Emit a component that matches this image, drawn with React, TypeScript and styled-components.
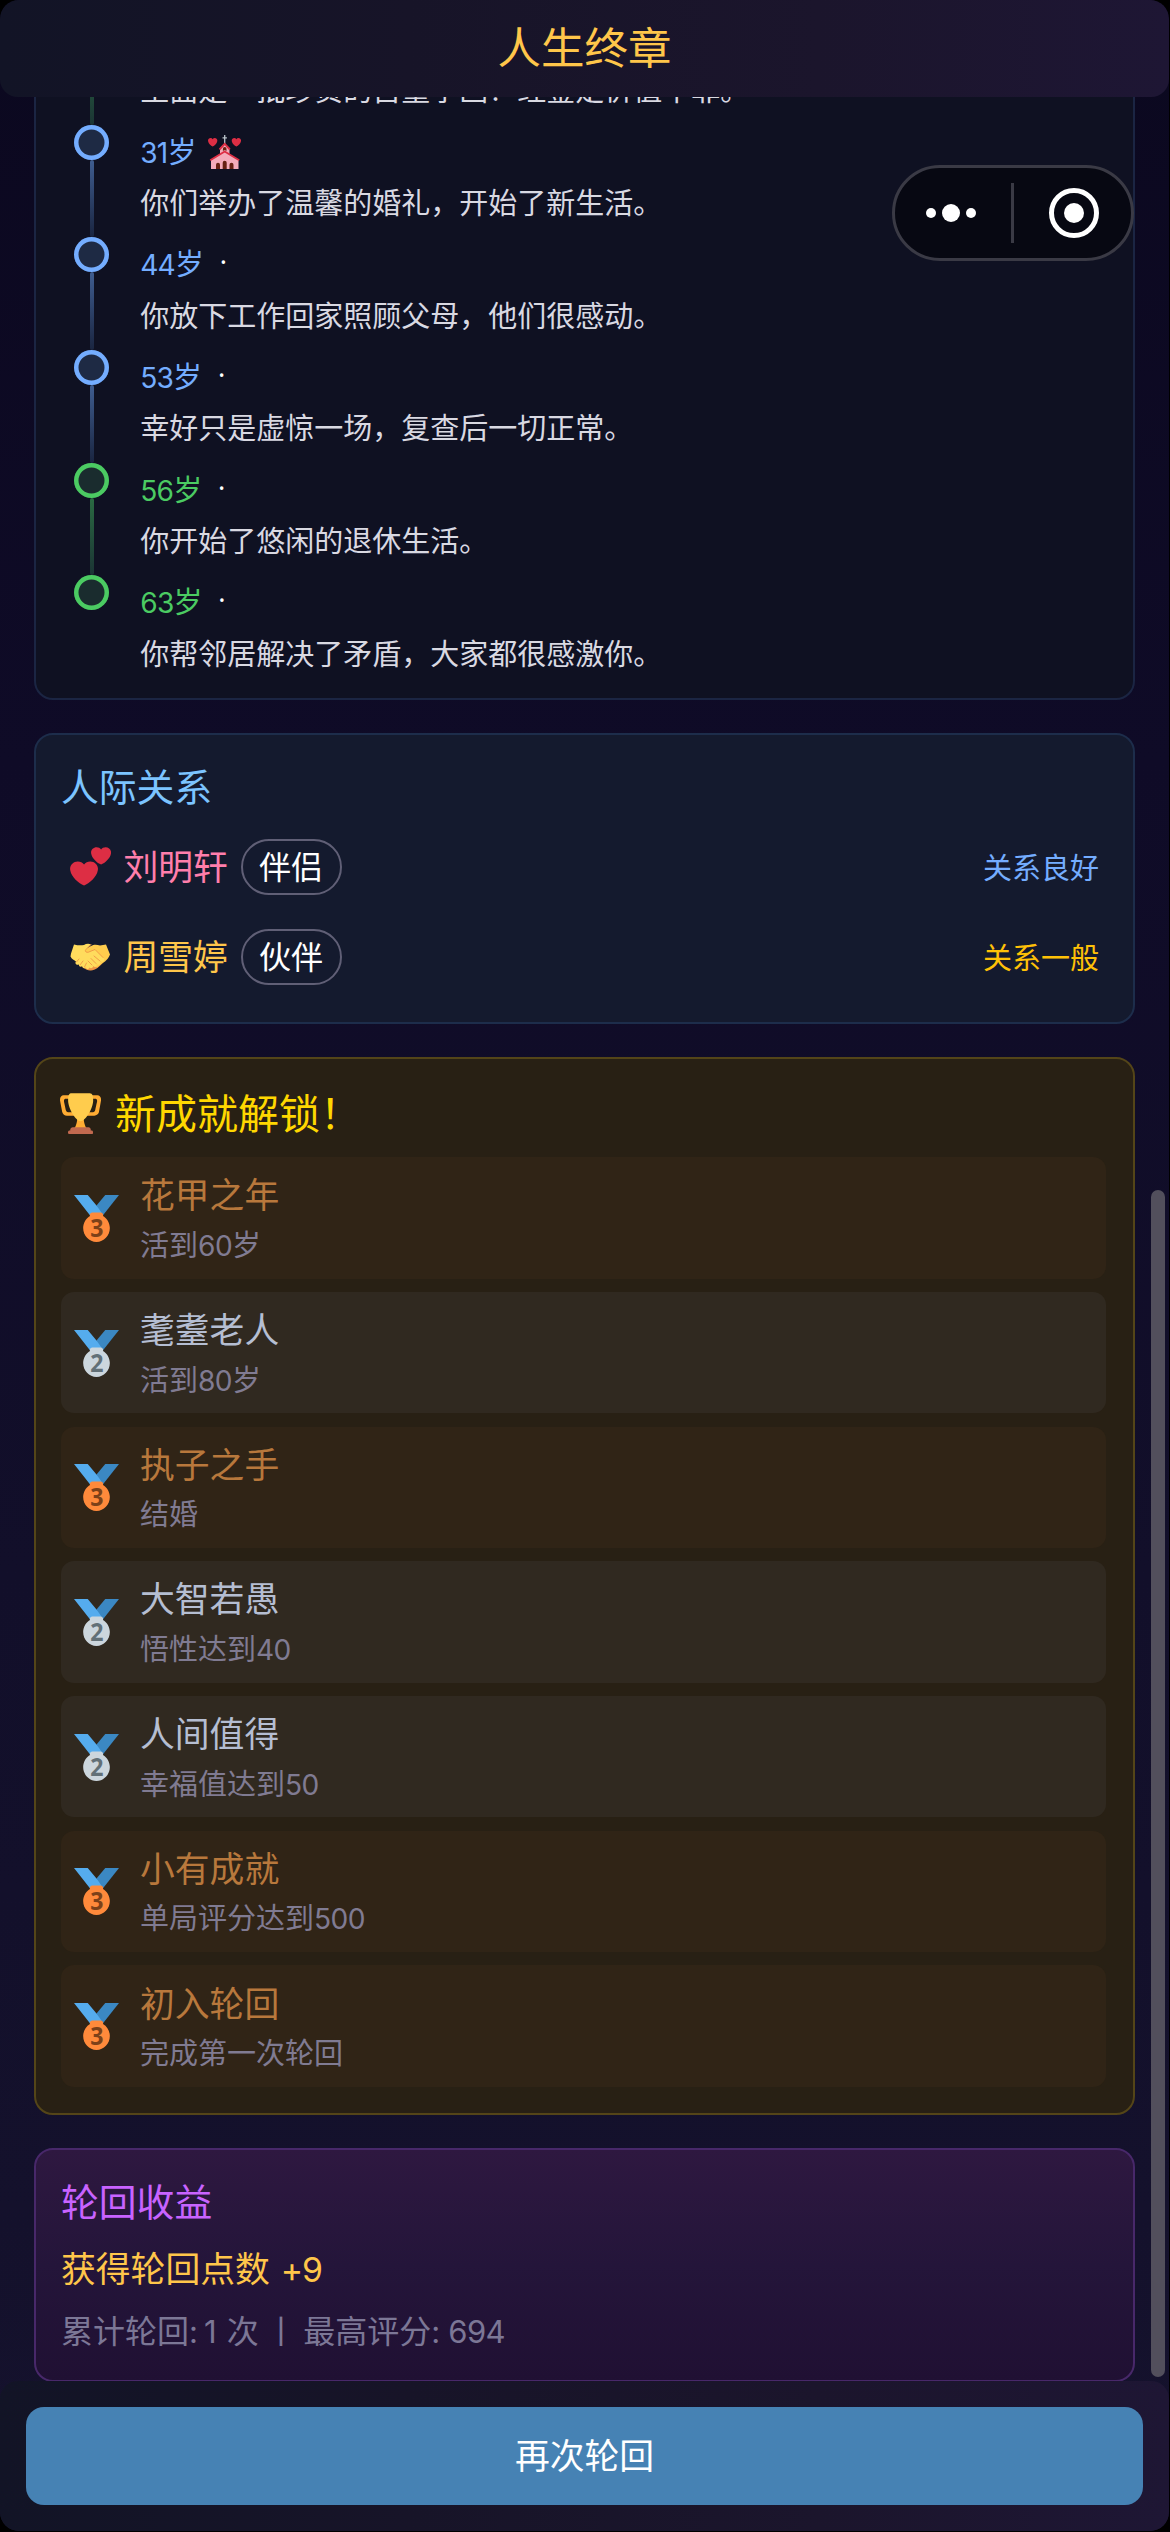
import React from "react";
import styled, { createGlobalStyle } from "styled-components";

const cjk = `"Noto Sans CJK SC", "Noto Sans", sans-serif`;

const GlobalStyle = createGlobalStyle`
  * { box-sizing: border-box; }
  html, body { margin: 0; background: #000; }
  body { font-family: ${cjk}; color: #fff; overflow: hidden; }
`;

const Page = styled.main`
  position: relative;
  display: flex;
  flex-direction: column;
  width: 1169px;
  height: 2531px;
  margin-bottom: 1px;
  overflow: hidden;
  border-radius: 19px;
  background: linear-gradient(180deg, #0b081f 0%, #0f0b27 30%, #120f2a 62%, #15122d 100%);
`;

const barFill = `linear-gradient(90deg, #121426 0%, #171428 35%, #1b152c 70%, #1e1634 100%)`;

const Header = styled.header`
  flex: none;
  display: flex;
  align-items: center;
  justify-content: center;
  height: 97px;
  padding-bottom: 5px;
  border-radius: 18px;
  background: ${barFill};
  z-index: 1;
`;

const HeaderTitle = styled.h1`
  margin: 0;
  font-size: 43.5px;
  line-height: 56px;
  font-weight: 400;
  color: #ffc64a;
`;

const Content = styled.div`
  flex: 1;
  min-height: 0;
  display: flex;
  flex-direction: column;
  gap: 33px;
  padding: 0 34px;
  overflow: hidden;
`;

const Card = styled.section<{ $bg: string; $line: string }>`
  flex: none;
  width: 1101px;
  border: 2px solid ${(p) => p.$line};
  border-radius: 19px;
  background: ${(p) => p.$bg};
`;

const TimelineCard = styled(Card)`
  margin-top: -130px;
  padding: 43px 25px 9.8px 38px;
`;

const Event = styled.article`
  display: flex;
  gap: 31.3px;
  height: 112.7px;
`;

const Rail = styled.div`
  flex: none;
  display: flex;
  flex-direction: column;
  align-items: center;
  width: 35px;
`;

const Node = styled.i<{ $color: string; $fill: string }>`
  flex: none;
  width: 35px;
  height: 35px;
  border-radius: 50%;
  box-shadow: inset 0 0 0 4.5px ${(p) => p.$color};
  background: ${(p) => p.$fill};
`;

const Link = styled.i<{ $from: string; $to: string }>`
  flex: 1;
  width: 4px;
  border-radius: 2px;
  background: linear-gradient(180deg, ${(p) => p.$from}, ${(p) => p.$to});
`;

const EventBody = styled.div`
  display: flex;
  flex-direction: column;
  gap: 11.4px;
  padding-top: 5px;
`;

const EventHead = styled.div<{ $color: string }>`
  display: flex;
  align-items: center;
  height: 40px;
  font-size: 29px;
  line-height: 40px;
  color: ${(p) => p.$color};
`;

const EventText = styled.p`
  margin: 0;
  font-size: 29px;
  line-height: 40px;
  color: #d9d9e2;
  white-space: nowrap;
`;

const Num = styled.span<{ $track?: number; $left?: number; $right?: number }>`
  font-family: Inter, "Noto Sans", sans-serif;
  font-size: 0.97em;
  line-height: 0;
  letter-spacing: ${(p) => p.$track ?? -0.03}em;
  margin-left: ${(p) => p.$left ?? 0}px;
  margin-right: ${(p) => p.$right ?? 0}px;
`;

const Dot = styled.span`
  width: 29px;
  margin-left: 5px;
  color: #fff;
  font-family: "Noto Sans", sans-serif;
  font-size: 27px;
  text-align: center;
`;

const HeadIcon = styled.span`
  display: flex;
  margin: 4px 0 0 12px;
`;

const CardTitle = styled.h2<{ $color: string }>`
  margin: 0;
  font-size: 37.8px;
  line-height: 50px;
  font-weight: 400;
  color: ${(p) => p.$color};
`;

const RelationCard = styled(Card)`
  height: 291px;
  padding: 25px;
`;

const RelationList = styled.div`
  display: flex;
  flex-direction: column;
  margin-top: 12px;
`;

const Relation = styled.div`
  display: flex;
  align-items: center;
  height: 90px;
  padding: 0 9px;
`;

const RelationName = styled.span<{ $color: string }>`
  width: 105px;
  margin: 0 12px 4px 12.5px;
  font-size: 34.8px;
  line-height: 46px;
  white-space: nowrap;
  color: ${(p) => p.$color};
`;

const Tag = styled.span`
  display: flex;
  align-items: center;
  justify-content: center;
  width: 101px;
  height: 56px;
  padding-bottom: 3px;
  border: 2px solid #605f76;
  border-radius: 28px;
  font-size: 32px;
  line-height: 42px;
`;

const Status = styled.span<{ $color: string }>`
  margin: 0 0 2px auto;
  font-size: 29px;
  line-height: 40px;
  color: ${(p) => p.$color};
`;

const AwardCard = styled(Card)`
  padding: 25px 27px 26px 25px;
`;

const AwardTitle = styled.h2`
  display: flex;
  align-items: center;
  gap: 14px;
  height: 54px;
  margin: 0 0 19.3px -1px;
  font-size: 41px;
  line-height: 54px;
  font-weight: 400;
  color: #ffd700;

  svg { margin-top: 6px; }
`;

const AwardList = styled.div`
  display: flex;
  flex-direction: column;
  gap: 13.3px;
`;

const tiers = {
  bronze: { bg: "#302416", text: "#b8783c", disc: "#ff8a3b", ink: "#7c4119", place: "3" },
  silver: { bg: "#302920", text: "#b5bed2", disc: "#ccd6dd", ink: "#627077", place: "2" },
};
type Tier = keyof typeof tiers;

const Award = styled.div<{ $tier: Tier }>`
  display: flex;
  align-items: center;
  gap: 21px;
  height: 121.4px;
  padding-left: 13px;
  border-radius: 13px;
  background: ${(p) => tiers[p.$tier].bg};

  svg { margin-top: 1px; }
`;

const AwardBody = styled.div`
  display: flex;
  flex-direction: column;
  gap: 6.5px;
  margin-bottom: 2.5px;
`;

const AwardName = styled.span<{ $tier: Tier }>`
  font-size: 34.8px;
  line-height: 46px;
  color: ${(p) => tiers[p.$tier].text};
`;

const AwardRule = styled.span`
  font-size: 29px;
  line-height: 40px;
  color: #807b92;
`;

const RewardCard = styled(Card)`
  height: 234px;
  padding: 25px;
`;

const Points = styled.p`
  margin: 18.8px 0 0;
  font-size: 34.8px;
  line-height: 46px;
  color: #ffc64a;
`;

const Totals = styled.p`
  margin: 18.5px 0 0;
  font-size: 32px;
  line-height: 42px;
  color: #7c7796;
  white-space: nowrap;
`;

const Divider = styled.span`
  display: inline-block;
  width: 44.5px;
  text-align: center;
`;

const Footer = styled.footer`
  flex: none;
  height: 150px;
  padding: 26px;
  border-radius: 18px;
  background: ${barFill};
`;

const Again = styled.button`
  width: 100%;
  height: 98px;
  padding: 0 0 5px;
  border: 0;
  border-radius: 18px;
  background: #4682b4;
  color: #fff;
  font: 400 34.8px/46px ${cjk};
`;

/* Floating mini-program capsule, above the scrolled content */
const Capsule = styled.div`
  position: absolute;
  top: 165px;
  left: 891.5px;
  z-index: 2;
  display: flex;
  align-items: center;
  width: 242px;
  height: 96px;
  border: 3px solid #3a3a45;
  border-radius: 48px;
  background: #070812;
`;

const More = styled.div`
  flex: 1;
  display: flex;
  align-items: center;
  justify-content: center;
  gap: 6px;
  padding-right: 4px;
`;

const MoreDot = styled.i<{ $size: number }>`
  width: ${(p) => p.$size}px;
  height: ${(p) => p.$size}px;
  border-radius: 50%;
  background: #fff;
`;

const CapsuleRule = styled.i`
  width: 3px;
  height: 60px;
  background: #3a3a45;
`;

const CloseHalf = styled(More)`
  padding: 0 0 0 4px;
`;

const Target = styled.i`
  display: flex;
  align-items: center;
  justify-content: center;
  width: 50px;
  height: 50px;
  border: 5px solid #fff;
  border-radius: 50%;
`;

const ScrollThumb = styled.i`
  position: absolute;
  top: 1190px;
  left: 1151px;
  width: 14px;
  height: 1187px;
  border-radius: 7px;
  background: #524f5c;
`;

const heart =
  "M35.885 11.833c0-5.45-4.418-9.868-9.867-9.868-3.308 0-6.227 1.633-8.018 4.129-1.791-2.496-4.71-4.129-8.017-4.129-5.45 0-9.868 4.417-9.868 9.868 0 .772.098 1.52.266 2.241C1.751 22.587 11.216 31.568 18 34.034c6.783-2.466 16.249-11.447 17.617-19.959.17-.721.268-1.469.268-2.242z";

const HeartsIcon = () => (
  <svg width="41" height="41" viewBox="0 0 41 41">
    <g fill="#dd2e44">
      <path transform="translate(0 14) scale(.78 .75)" d={heart} />
      <path transform="translate(21 .2) scale(.56 .54)" d={heart} />
    </g>
  </svg>
);

const HandshakeIcon = () => (
  <svg width="41" height="41" viewBox="0 0 41 41">
    <path fill="#ef9645" d="M8 26c4 5 8 9 13 8.500 4 0 9-4 13-9l-3-8H13z" />
    <path fill="#ffcc4d" d="M21 10c3-2 6-1.500 9-.500l6-1 4 10c-1 3-3 5-5 7l-3 2-5 4-13-10-5-5z" />
    <path
      fill="#ffdc5d"
      d="M1 17.500 4 8.500c4 1 7 1 10 .500 2-1.300 5-1.500 7-.500l-5 5c-2 2 1 4 4 2l5-2 8 8c3 3 0 5.500-3 3.500 2 3-1 5-3.500 3 1 3-1.500 4-3.500 2 .5 2-2.500 3-3.500 1.500-1 2.500-3.500 2-3.500 0-2 1.500-4 .500-3.500-1.500-2 1.500-4 .500-3.500-1.500-2.500 1-4.500-1-3-3-1.500-1.500-4.500-2.500-5.500-5z"
    />
    <path
      fill="none"
      stroke="#ef9645"
      strokeWidth="0.900"
      strokeLinecap="round"
      d="M21 8.500l-5 5c-2 2 1 4 4 2l5-2 8 8M24 20l6 5M21 22.500l5 5M18 25l4 4M9 23l-2.500 3M13 25l-3 4M16.500 27l-2 4"
    />
  </svg>
);

const ChapelIcon = () => (
  <svg width="34" height="34" viewBox="0 0 34 34">
    <g fill="#dd2e44">
      <path transform="translate(0 2.600) scale(.26)" d={heart} />
      <path transform="translate(23.700 2.600) scale(.26)" d={heart} />
    </g>
    <path fill="none" stroke="#b9c2c9" strokeWidth="1.300" d="M16.700 0v9M14.500 2.800h4.400" />
    <path fill="#f4abba" d="M12 13l4.700-4.500L21.500 13v6l9 6v9H3v-9l9-6z" />
    <path
      fill="none"
      stroke="#dd2e44"
      strokeWidth="1.900"
      d="M11.500 14.500l5.200-5.600 5.200 5.600M2.200 25.200l14.500-8.700 14.500 8.700"
    />
    <path
      fill="#662113"
      d="M14.900 16v-2.200a1.800 1.800 0 0 1 3.600 0V16l-1.800-1zM14.700 34v-6.300a2 2 0 0 1 4 0V34zM8 34v-4.300a2 2 0 0 1 4 0V34zM21.500 34v-4.300a2 2 0 0 1 4 0V34z"
    />
  </svg>
);

const TrophyIcon = () => (
  <svg width="41" height="41" viewBox="0 0 36 36">
    <path
      fill="#ffac33"
      d="M5.123 5h6C12.227 5 13 4.896 13 6V4c0-1.104-.773-2-1.877-2h-8c-2 0-3.583 2.125-3 5 0 0 1.791 9.375 1.917 9.958C2.373 18.500 4.164 20 6.081 20h6.958c1.105 0-.039-1.896-.039-3v-2c0 1.104-.773 2-1.877 2h-4c-1.104 0-1.833-1.042-2-2S3.539 7.667 3.539 7.667C3.206 5.750 4.018 5 5.123 5zm25.812 0h-6C23.831 5 22 4.896 22 6V4c0-1.104 1.831-2 2.935-2h8c2 0 3.584 2.125 3 5 0 0-1.633 9.419-1.771 10-.354 1.500-2.042 3-4 3h-7.146C21.914 20 22 18.104 22 17v-2c0 1.104 1.831 2 2.935 2h4c1.104 0 1.834-1.042 2-2s1.584-7.333 1.584-7.333C32.851 5.750 32.040 5 30.935 5zM20.832 22c0-6.958-2.709 0-2.709 0s-3-6.958-3 0-3.291 10-3.291 10h12.292c-.001 0-3.292-3.042-3.292-10z"
    />
    <path
      fill="#ffcc4d"
      d="M29.123 6.577c0 6.775-6.770 18.192-11 18.192-4.231 0-11-11.417-11-18.192 0-5.195 1-6.319 3-6.319 1.374 0 6.025-.027 8-.027l7-.001c2.917-.001 4 .684 4 6.347z"
    />
    <path
      fill="#c1694f"
      d="M27 33c0 1.104.227 2-.877 2h-16C9.018 35 9 34.104 9 33v-1c0-1.104 1.164-2 2.206-2h13.917c1.042 0 1.877.896 1.877 2v1zM29 34.625c0 .760.165 1.375-1.252 1.375H8.498C7.206 36 7 35.385 7 34.625v-.250C7 33.615 7.738 33 8.498 33h19.250c.759 0 1.252.615 1.252 1.375v.250z"
    />
  </svg>
);

const MedalDigit = styled.text`
  font: 700 18.5px "Noto Sans", sans-serif;
  text-anchor: middle;
`;

const MedalIcon = ({ tier }: { tier: Tier }) => (
  <svg width="45" height="47" viewBox="0 0 36 36" preserveAspectRatio="none">
    <path fill="#55acee" d="M18 8l-7-8H0l14 17 11.521-4.750z" />
    <path fill="#3b88c3" d="M25 0l-7 8 5.390 7.312 1.227-1.489L36 0z" />
    <path
      fill={tiers[tier].disc}
      d="M23.205 16.026c.080-.217.131-.448.131-.693 0-1.104-.896-2-2-2h-6.667c-1.105 0-2 .896-2 2 0 .245.050.476.131.693-3.258 1.826-5.464 5.307-5.464 9.307C7.335 31.224 12.111 36 18.002 36s10.667-4.776 10.667-10.667c0-4-2.206-7.481-5.464-9.307z"
    />
    <MedalDigit x="18.200" y="32" fill={tiers[tier].ink}>
      {tiers[tier].place}
    </MedalDigit>
  </svg>
);

const phases = {
  blue: { color: "#74adff", fill: "#1e2a44", from: "#3f5d90", to: "#1a2540" },
  green: { color: "#4bcb62", fill: "#1a2c2e", from: "#2a6a42", to: "#1b3434" },
};

const events: { age?: string; text: string; phase: keyof typeof phases; chapel?: boolean }[] = [
  { text: "里面是一批珍贵的古董字画！经鉴定价值不菲。", phase: "green" },
  { age: "31", text: "你们举办了温馨的婚礼，开始了新生活。", phase: "blue", chapel: true },
  { age: "44", text: "你放下工作回家照顾父母，他们很感动。", phase: "blue" },
  { age: "53", text: "幸好只是虚惊一场，复查后一切正常。", phase: "blue" },
  { age: "56", text: "你开始了悠闲的退休生活。", phase: "green" },
  { age: "63", text: "你帮邻居解决了矛盾，大家都很感激你。", phase: "green" },
];

const awards: { name: string; rule: string; value?: string; unit?: string; tier: Tier }[] = [
  { name: "花甲之年", rule: "活到", value: "60", unit: "岁", tier: "bronze" },
  { name: "耄耋老人", rule: "活到", value: "80", unit: "岁", tier: "silver" },
  { name: "执子之手", rule: "结婚", tier: "bronze" },
  { name: "大智若愚", rule: "悟性达到", value: "40", tier: "silver" },
  { name: "人间值得", rule: "幸福值达到", value: "50", tier: "silver" },
  { name: "小有成就", rule: "单局评分达到", value: "500", tier: "bronze" },
  { name: "初入轮回", rule: "完成第一次轮回", tier: "bronze" },
];

export default function App() {
  return (
    <>
      <GlobalStyle />
      <Page>
        <Header>
          <HeaderTitle>人生终章</HeaderTitle>
        </Header>

        <Content>
          <TimelineCard $bg="#0f1122" $line="#1b2543">
            {events.map((e, i) => {
              const phase = phases[e.phase];
              return (
                <Event key={e.text}>
                  <Rail>
                    <Node $color={phase.color} $fill={phase.fill} />
                    {i < events.length - 1 && <Link $from={phase.from} $to={phase.to} />}
                  </Rail>
                  <EventBody>
                    <EventHead $color={phase.color}>
                      {e.age && (
                        <span>
                          <Num>{e.age}</Num>岁
                        </span>
                      )}
                      {e.chapel && (
                        <HeadIcon>
                          <ChapelIcon />
                        </HeadIcon>
                      )}
                      {e.age && !e.chapel && <Dot>·</Dot>}
                    </EventHead>
                    <EventText>{e.text}</EventText>
                  </EventBody>
                </Event>
              );
            })}
          </TimelineCard>

          <RelationCard $bg="#141a2e" $line="#1d2d4b">
            <CardTitle $color="#7cc4ff">人际关系</CardTitle>
            <RelationList>
              <Relation>
                <HeartsIcon />
                <RelationName $color="#ff7eab">刘明轩</RelationName>
                <Tag>伴侣</Tag>
                <Status $color="#74adff">关系良好</Status>
              </Relation>
              <Relation>
                <HandshakeIcon />
                <RelationName $color="#ffc64a">周雪婷</RelationName>
                <Tag>伙伴</Tag>
                <Status $color="#ffc107">关系一般</Status>
              </Relation>
            </RelationList>
          </RelationCard>

          <AwardCard $bg="#282014" $line="#544518">
            <AwardTitle>
              <TrophyIcon />
              新成就解锁！
            </AwardTitle>
            <AwardList>
              {awards.map((a) => (
                <Award key={a.name} $tier={a.tier}>
                  <MedalIcon tier={a.tier} />
                  <AwardBody>
                    <AwardName $tier={a.tier}>{a.name}</AwardName>
                    <AwardRule>
                      {a.rule}
                      {a.value && <Num $track={-0.02}>{a.value}</Num>}
                      {a.unit}
                    </AwardRule>
                  </AwardBody>
                </Award>
              ))}
            </AwardList>
          </AwardCard>

          <RewardCard $bg="linear-gradient(180deg, #2e1840, #24153a 50%, #201033)" $line="#48286a">
            <CardTitle $color="#c863ff">轮回收益</CardTitle>
            <Points>
              获得轮回点数<Num $left={11}>+9</Num>
            </Points>
            <Totals>
              累计轮回<Num>:</Num>
              <Num $left={7} $right={11}>1</Num>次<Divider>丨</Divider>最高评分<Num>:</Num>
              <Num $left={9} $track={-0.02}>694</Num>
            </Totals>
          </RewardCard>
        </Content>

        <Footer>
          <Again>再次轮回</Again>
        </Footer>

        <Capsule>
          <More>
            <MoreDot $size={10} />
            <MoreDot $size={18} />
            <MoreDot $size={10} />
          </More>
          <CapsuleRule />
          <CloseHalf>
            <Target>
              <MoreDot $size={20} />
            </Target>
          </CloseHalf>
        </Capsule>
        <ScrollThumb />
      </Page>
    </>
  );
}
